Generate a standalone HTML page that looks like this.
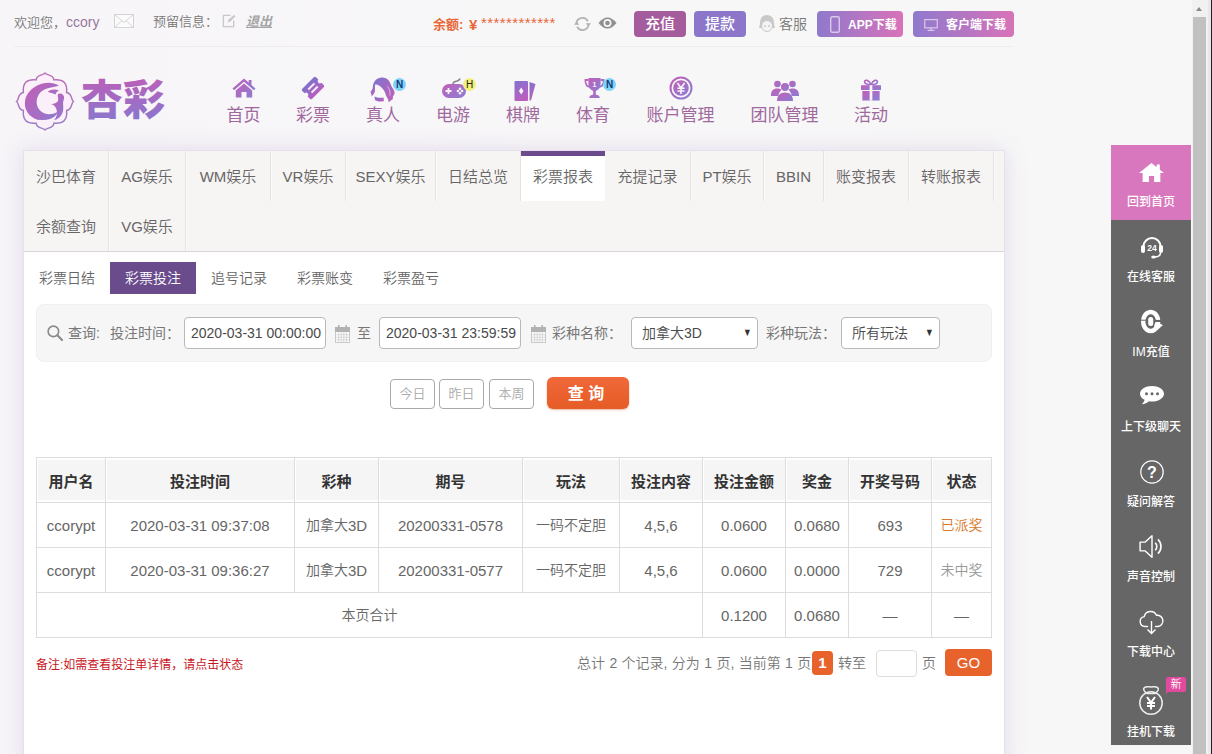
<!DOCTYPE html>
<html lang="zh-CN">
<head>
<meta charset="utf-8">
<title>杏彩 - 彩票投注</title>
<style>
*{box-sizing:border-box;margin:0;padding:0}
html,body{width:1212px;height:754px;overflow:hidden}
body{position:relative;font-family:"Liberation Sans","Noto Sans CJK SC",sans-serif;font-size:14px;color:#666;background:#f8f7f8;font-weight:350}
.abs{position:absolute}
#bg{position:absolute;left:0;top:0;width:1192px;height:754px;background:
 linear-gradient(90deg,#f7f5f8 0,#f8f7f8 600px,#f7f7f7 1100px)}
/* scrollbar */
#sb{position:absolute;left:1192px;top:0;width:20px;height:754px;background:#f1f1f1}
#sb .thumb{position:absolute;left:1px;top:17px;width:13px;height:737px;background:#c1c1c1}
#sb .edge{position:absolute;left:16px;top:0;width:3px;height:754px;background:#e6e6ec}
#sb .line{position:absolute;left:19px;top:0;width:1px;height:754px;background:#222}
#sb .arr{position:absolute;left:4px;top:7px;width:0;height:0;border-left:3.500px solid transparent;border-right:3.500px solid transparent;border-bottom:4px solid #8a8a8a}
/* top bar */
#top{position:absolute;left:14px;top:0;width:1000px;height:47px;border-bottom:1px solid #eeecee}
#top span,#top a{position:absolute;white-space:nowrap;line-height:20px;top:12px;font-size:13px;color:#777}
.btn{font-weight:400;position:absolute;top:11px;height:26px;border-radius:4px;color:#fff;font-size:14px;line-height:26px;text-align:center;white-space:nowrap}
/* nav */
.nav{position:absolute;top:70px;height:60px;text-align:center;color:#a0699e;font-size:17px}
.nav b{position:absolute;left:0;right:0;top:35px;font-weight:normal;line-height:22px}
.nav svg{position:absolute;top:8px}
/* panel */
#panel{position:absolute;left:23px;top:150px;width:982px;height:620px;background:#fff;border:1px solid #e6e0ea;box-shadow:0 0 22px rgba(150,110,190,.2)}
#tabs{position:absolute;left:0;top:0;width:980px;height:101px;background:#f7f4f4;border-bottom:1px solid #d9d6d9}
.tab{position:absolute;height:50px;line-height:52px;font-size:15px;color:#666;text-align:center;border-right:1px solid #e6e2e4;white-space:nowrap;box-shadow:1px 0 0 #fbfafa}
.tab.on{box-shadow:none;background:#fff;border-top:5px solid #6a4b8c;line-height:42px;border-right:none}
.sub{position:absolute;top:111px;height:32px;width:86px;line-height:32px;text-align:center;font-size:14px;color:#666}
.sub.on{background:#6a4b8c;color:#fff}
#search{position:absolute;left:12px;top:153px;width:956px;height:58px;background:#f6f6f6;border-radius:8px;border:1px solid #f0f0f0}
#search span{position:absolute;top:18px;line-height:20px;font-size:14px;color:#777;font-weight:400;white-space:nowrap}
.inp{position:absolute;top:12px;height:32px;border:1px solid #b9b9b9;border-radius:4px;background:#fff;font-size:14px;color:#4a4a4a;line-height:30px;padding-left:6px;white-space:nowrap}
.qb{position:absolute;top:228px;height:30px;width:45px;border:1px solid #aaa;border-radius:4px;color:#aaa;font-size:13px;line-height:28px;text-align:center;background:#fff}
#go{position:absolute;left:523px;top:226px;width:82px;height:32px;border-radius:6px;background:linear-gradient(#f0683a,#e65c26);color:#fff;font-size:16px;font-weight:bold;line-height:34px;text-align:center;padding-right:4px;box-shadow:0 1px 2px rgba(200,80,30,.4)}
table{position:absolute;left:12px;top:306px;width:956px;border-collapse:collapse;table-layout:fixed}
td,th{border:1px solid #ddd;height:45px;text-align:center;font-size:15px;color:#666;font-weight:normal;white-space:nowrap;padding:0}
th{background:#f5f5f5;color:#333;font-weight:bold;font-size:15px;box-shadow:inset 0 2px 0 #fff,inset 0 -2px 0 #fff,inset 1px 0 0 #fff}
.c{font-size:14px;position:relative;top:-1px;font-weight:350}
.inp .arr{position:absolute;right:4px;top:-1px;font-style:normal;font-size:11px;color:#333;transform:scaleX(.8)}
/* side */
.side{position:absolute;left:1111px;width:80px;height:75px;background:#666;color:#fff;text-align:center;font-size:12px}
.side b{position:absolute;left:0;right:0;top:46px;line-height:18px;font-weight:500}
.side svg{position:absolute;left:26px;top:12px}
</style>
</head>
<body>
<div id="bg"></div>
<div id="sb"><div class="arr"></div><div class="thumb"></div><div class="edge"></div><div class="line"></div></div>

<div id="top">
 <span style="left:0">欢迎您，<i style="font-style:normal;color:#96789c;font-size:14px">ccory</i></span>
 <svg class="abs" style="left:100px;top:14px" width="20" height="14" preserveAspectRatio="none" viewBox="0 0 20 15"><rect x=".5" y=".5" width="19" height="14" fill="#fbfbfb" stroke="#d2d2d2"/><path d="M1 1l9 8 9-8M1 14l7-7M19 14l-7-7" fill="none" stroke="#d2d2d2"/></svg>
 <span style="left:139px">预留信息：</span>
 <svg class="abs" style="left:208px;top:14px" width="14" height="14" viewBox="0 0 15 15"><path d="M9 1.5H1.500V13.500H12.500V7" fill="none" stroke="#c8c8c8" stroke-width="1.400"/><path d="M6 9l1-3 6-5 1.500 1.500-5.500 5.500z" fill="#c8c8c8"/></svg>
 <a style="left:232px;font-style:italic;text-decoration:underline;color:#a5a5a5;font-weight:bold">退出</a>
 <span style="left:419px;top:15px;color:#e8673a;font-weight:bold;font-size:13px">余额:</span>
 <span style="left:455px;top:15px;color:#e8673a;font-size:15px;font-weight:bold">¥</span>
 <span style="left:467px;color:#e8673a;font-size:15px;letter-spacing:.4px;top:13px">************</span>
 <svg class="abs" style="left:560px;top:16px" width="17" height="16" viewBox="0 0 17 16"><path d="M2.500 8.500A6 6 0 0 1 13.900 5.400M14.500 7.500A6 6 0 0 1 3.100 10.600" fill="none" stroke="#b4b4b4" stroke-width="1.800"/><path d="M0 8.800h5.200l-2.600-3.500zM17 7.200h-5.200l2.600 3.500z" fill="#b4b4b4"/></svg>
 <svg class="abs" style="left:584px;top:16px" width="19" height="14" viewBox="0 0 19 14"><path d="M.5 7Q9.500-4 18.500 7Q9.500 18 .5 7z" fill="#8f8f8f"/><circle cx="9.500" cy="7" r="4" fill="#f8f7f8"/><circle cx="9.500" cy="7" r="2.300" fill="#8f8f8f"/></svg>
 <div class="btn" style="left:620px;width:52px;background:#a55c9d;font-size:15px;font-weight:500">充值</div>
 <div class="btn" style="left:680px;width:52px;background:#8b76c9;font-size:15px;font-weight:500">提款</div>
 <svg class="abs" style="left:745px;top:15px" width="16" height="19" viewBox="0 0 16 19"><path d="M8 0C3 0 1 4 1 8c0 2-1 4-1 5h16c0-1-1-3-1-5C15 4 13 0 8 0z" fill="#c9c9c9"/><circle cx="8" cy="11" r="5.500" fill="#f4f4f4" stroke="#c9c9c9"/><circle cx="6" cy="11" r=".8" fill="#aaa"/><circle cx="10" cy="11" r=".8" fill="#aaa"/></svg>
 <span style="left:765px;top:14px;color:#777;font-size:14px">客服</span>
 <div class="btn" style="left:803px;width:86px;background:linear-gradient(90deg,#8f79cd,#d873b8);font-size:12px;font-weight:bold;text-align:left;padding-left:31px;line-height:28px">APP下载</div>
 <svg class="abs" style="left:816px;top:16px" width="10" height="17" viewBox="0 0 10 17"><rect x=".7" y=".7" width="8.600" height="15.600" rx="1.500" fill="none" stroke="#d9c8ec" stroke-width="1.400"/></svg>
 <div class="btn" style="left:899px;width:101px;background:linear-gradient(90deg,#8f79cd,#d873b8);font-size:12px;font-weight:bold;text-align:left;padding-left:33px;line-height:28px">客户端下载</div>
 <svg class="abs" style="left:910px;top:19px" width="14" height="12" viewBox="0 0 16 14"><rect x=".7" y=".7" width="14.600" height="9.600" fill="none" stroke="#d9c8ec" stroke-width="1.400"/><path d="M8 10v3M4 13.300h8" stroke="#d9c8ec" stroke-width="1.400"/></svg>
</div>

<!-- LOGO -->
<svg class="abs" style="left:10px;top:66px" width="165" height="70" viewBox="0 0 165 70">
 <defs>
  <linearGradient id="lg" x1="0" y1="0" x2="0" y2="1"><stop offset="0" stop-color="#bb5fb8"/><stop offset="1" stop-color="#8779cf"/></linearGradient>
  <linearGradient id="lg2" x1="0" y1="0" x2="1" y2="1"><stop offset="0" stop-color="#c75cb4"/><stop offset="1" stop-color="#8a7dd2"/></linearGradient>
  <linearGradient id="lg3" x1="0" y1="0" x2="0" y2="1"><stop offset="0" stop-color="#b86cb4"/><stop offset="1" stop-color="#9a80c8"/></linearGradient>
 </defs>
 <path d="M25.7 12.5 C26.3 6.5 33.1 8.1 35.0 5.4 C36.9 8.1 43.7 6.5 44.3 12.5 Q59.0 11.0 57.5 25.7 C63.5 26.3 61.9 33.1 64.6 35.0 C61.9 36.9 63.5 43.7 57.5 44.3 Q59.0 59.0 44.3 57.5 C43.7 63.5 36.9 61.9 35.0 64.6 C33.1 61.9 26.3 63.5 25.7 57.5 Q11.0 59.0 12.5 44.3 C6.5 43.7 8.1 36.9 5.4 35.0 C8.1 33.1 6.5 26.3 12.5 25.7 Q11.0 11.0 25.7 12.5 z" fill="#fbf0f9" stroke="url(#lg3)" stroke-width="1.500" transform="translate(35 35.500) scale(.96) translate(-35 -35)"/>
 <g transform="translate(34.500 35.500) scale(.93) translate(-36.500 -35.500)">
 <path d="M52 18.500C40 11 22 18 16.500 31 12 45 22 56 36 55.500c8-.5 13-4 15.500-9.500-6 4.500-15 4.500-20-1-5.500-6-4-16 2-20.500 5.500-4 12.500-4.500 18.500-6z" fill="url(#lg2)"/>
 <path d="M40 25c3-2.500 8-3 12-1.500-2 1.500-3.500 2.500-3.500 4.500-3-1.500-6-2-8.500-3z" fill="url(#lg2)"/>
 <path d="M51 27.500c3-1.500 6 0 6.500 3 .5 2.500-1 4-1 6.500 0 4 1 8-1.500 12.500-2 3.500-5 5.500-8 6 3-3.500 3.500-7 2.500-11-.8-3.500-3-5.500-6-6 3.500-1 6-1 7.500-3.500 1-2-1-5.500 0-7.500z" fill="url(#lg2)"/>
 <path d="M22 50c4 1 7 .5 9-1 2 2 5 2.500 8 1.500-3 3.500-6 4.500-10 4.500-3-.5-5.500-2.500-7-5z" fill="url(#lg2)"/>
 </g>
 <text x="71" y="49" font-family="'Liberation Sans','Noto Sans CJK SC',sans-serif" font-weight="900" font-size="42" fill="url(#lg)" textLength="84" lengthAdjust="spacingAndGlyphs">杏彩</text>
</svg>
<!-- /LOGO --><!-- NAV -->
<svg width="0" height="0" style="position:absolute"><defs><linearGradient id="ig" x1="0" y1="0" x2="1" y2="1"><stop offset="0" stop-color="#c25fb7"/><stop offset="1" stop-color="#8b7ed4"/></linearGradient><linearGradient id="ig3" x1="0" y1="0" x2="1" y2="1"><stop offset="0" stop-color="#7d74cf"/><stop offset="1" stop-color="#c45fb8"/></linearGradient><linearGradient id="ig4" x1="0" y1="0" x2="0.300" y2="1"><stop offset="0" stop-color="#8272cf"/><stop offset="1" stop-color="#bb5fbf"/></linearGradient><linearGradient id="ig2" x1="0" y1="0" x2="0" y2="1"><stop offset="0" stop-color="#7f72cc"/><stop offset="1" stop-color="#b85fc0"/></linearGradient></defs></svg>
<div class="nav" style="left:208.5px;width:70px"><svg style="left:23px;top:8px" width="24" height="20" viewBox="0 0 24 20"><path d="M12 0.500L0.500 10.500l1.600 1.700L12 3.800l9.900 8.400 1.600-1.700-4-3.500V2h-2.800v2.600z" fill="url(#ig)"/><path d="M12 5.500L3.800 12.500V19.500h5.700v-5.500h5v5.500h5.700V12.500z" fill="url(#ig)"/></svg><b>首页</b></div>
<div class="nav" style="left:278px;width:70px"><svg style="left:22px;top:6px" width="26" height="24" viewBox="0 0 24 22"><g transform="rotate(-45 12 11)"><path d="M4.500 4.500h15a1.500 1.500 0 0 1 1.500 1.500v3a2 2 0 0 0 0 4v3a1.500 1.500 0 0 1-1.500 1.500h-15a1.500 1.500 0 0 1-1.500-1.500v-3a2 2 0 0 0 0-4v-3a1.500 1.500 0 0 1 1.500-1.500z" fill="url(#ig2)"/><rect x="8" y="8" width="8" height="1.800" fill="#fbeefa"/><rect x="8" y="12.200" width="8" height="1.800" fill="#fbeefa"/></g></svg><b>彩票</b></div>
<div class="nav" style="left:348px;width:70px"><svg style="left:22px;top:7px" width="26" height="26" viewBox="0 0 26 26"><path d="M3 12C2 6 6 .5 12 .5c6 0 8 4.500 9 7.500 1 3 3 4 3.500 7 .5 3-2.500 4-1.500 7-2 1-4 3-4.500 3.500.5-3.500-2.500-5.500-3-8.500C15 14 13 12 11 10 9 8 6 7 5 8c-1 1-1 3-2 4z" fill="url(#ig3)"/><path d="M5 8C2 10 3 13 .5 14.500 1 17 2 18 1.500 19.500 3.500 17.500 5.500 15 5 12z" fill="url(#ig3)"/><path d="M4.500 19.500c2.500 1.500 6.500 1.500 9 1l.5 3.500c-4 1-7 .5-9-1z" fill="url(#ig3)"/><path d="M12.500 13c1.500 2 1.500 4.500.5 6.500M17.500 9.500c2 2.500 3 6 2.500 9" fill="none" stroke="#f8f6f8" stroke-width=".8" opacity=".7"/></svg><i style="position:absolute;left:45px;top:8px;width:13px;height:13px;border-radius:7px;background:#7fd4f4;color:#123a80;font:bold 10px/13px 'Liberation Sans',sans-serif;text-align:center">N</i><b>真人</b></div>
<div class="nav" style="left:418px;width:70px"><svg style="left:23px;top:7px" width="26" height="22" viewBox="0 0 26 22"><path d="M12 7.500C12 4.500 14 4.500 15.500 4.200s3-.7 3.500-2.700" fill="none" stroke="#8a8590" stroke-width="1.600"/><rect x="1" y="7" width="24" height="14" rx="7" fill="url(#ig)"/><path d="M7.500 11v6M4.500 14h6" stroke="#f8f6f8" stroke-width="1.800"/><circle cx="17" cy="14" r="1.300" fill="#f8f6f8"/><circle cx="21" cy="14" r="1.300" fill="#f8f6f8"/><circle cx="19" cy="11.700" r="1.300" fill="#f8f6f8"/><circle cx="19" cy="16.300" r="1.300" fill="#f8f6f8"/></svg><i style="position:absolute;left:45px;top:8px;width:13px;height:13px;border-radius:7px;background:#f3f07c;color:#222;font:normal 10px/13px 'Liberation Sans',sans-serif;text-align:center">H</i><b>电游</b></div>
<div class="nav" style="left:488px;width:70px"><svg style="left:25px;top:9.5px" width="24" height="22" viewBox="0 0 24 22"><path d="M16.500 2l6 2-4.500 16.500h-1.500z" fill="url(#ig4)"/><rect x="1.500" y="1" width="13.500" height="20" rx="1" fill="url(#ig4)"/><path d="M8.200 7.500l2.300 3.500-2.300 3.500-2.300-3.500z" fill="#fdf4fc"/></svg><b>棋牌</b></div>
<div class="nav" style="left:558px;width:70px"><svg style="left:26px;top:7px" width="21" height="22" viewBox="0 0 24 22" preserveAspectRatio="none"><path d="M5 1h14v6a7 7 0 0 1-14 0z" fill="url(#ig)"/><path d="M5 3H1.500c0 4 1.500 6.500 5 7M19 3h3.500c0 4-1.500 6.500-5 7" fill="none" stroke="url(#ig)" stroke-width="1.800"/><rect x="10.500" y="13" width="3" height="5" fill="url(#ig)"/><path d="M6 21c0-2 2-3.500 6-3.500s6 1.500 6 3.500z" fill="url(#ig)"/><text x="12" y="10.500" font-size="8" font-weight="bold" text-anchor="middle" fill="#f8f6f8" font-family="Liberation Sans,sans-serif">1</text></svg><i style="position:absolute;left:45px;top:8px;width:13px;height:13px;border-radius:7px;background:#7fd4f4;color:#123a80;font:bold 10px/13px 'Liberation Sans',sans-serif;text-align:center">N</i><b>体育</b></div>
<div class="nav" style="left:628.5px;width:104px"><svg style="left:40px;top:6px" width="24" height="24" viewBox="0 0 24 24"><circle cx="12" cy="12" r="10.500" fill="none" stroke="url(#ig)" stroke-width="2"/><circle cx="12" cy="12" r="7.800" fill="url(#ig)"/><path d="M8.500 7l3.500 5 3.500-5M12 12v6M8.500 12.300h7M8.500 15h7" fill="none" stroke="#f8f6f8" stroke-width="1.600"/></svg><b>账户管理</b></div>
<div class="nav" style="left:732.5px;width:104px"><svg style="left:38px;top:9px" width="28" height="22" viewBox="0 0 28 22"><circle cx="6.500" cy="5" r="3.300" fill="url(#ig)"/><circle cx="21.500" cy="5" r="3.300" fill="url(#ig)"/><path d="M0 16c0-4 2-6.500 6.500-6.500 2 0 3 .5 4 1.500-2 1.500-3 3.500-3 6H0zM28 16c0-4-2-6.500-6.500-6.500-2 0-3 .5-4 1.500 2 1.500 3 3.500 3 6H28z" fill="url(#ig)"/><circle cx="14" cy="8" r="4" fill="url(#ig)"/><path d="M6 22c0-5.500 3-8.500 8-8.500s8 3 8 8.500z" fill="url(#ig)"/></svg><b>团队管理</b></div>
<div class="nav" style="left:836px;width:70px"><svg style="left:25px;top:8.5px" width="20" height="22" viewBox="0 0 22 23" preserveAspectRatio="none"><path d="M11 6C9 1 4 0 4 3s4 3 7 3c3 0 7 0 7-3s-5-2-7 3z" fill="none" stroke="url(#ig)" stroke-width="1.800"/><rect x="0" y="6.500" width="22" height="5" fill="url(#ig)"/><rect x="1.500" y="12.500" width="19" height="10" fill="url(#ig)"/><rect x="9.500" y="6.500" width="3" height="16" fill="#f8f6f8"/></svg><b>活动</b></div>
<!-- /NAV -->

<div id="panel">
<div id="tabs">
<div class="tab" style="left:0px;top:0;width:85px">沙巴体育</div>
<div class="tab" style="left:85px;top:0;width:77px">AG娱乐</div>
<div class="tab" style="left:162px;top:0;width:85px">WM娱乐</div>
<div class="tab" style="left:247px;top:0;width:75px">VR娱乐</div>
<div class="tab" style="left:322px;top:0;width:90px">SEXY娱乐</div>
<div class="tab" style="left:412px;top:0;width:85px">日结总览</div>
<div class="tab on" style="left:497px;top:0;width:84px">彩票报表</div>
<div class="tab" style="left:581px;top:0;width:86px">充提记录</div>
<div class="tab" style="left:667px;top:0;width:73px">PT娱乐</div>
<div class="tab" style="left:740px;top:0;width:60px">BBIN</div>
<div class="tab" style="left:800px;top:0;width:85px">账变报表</div>
<div class="tab" style="left:885px;top:0;width:85px">转账报表</div>
<div class="tab" style="left:0;top:50px;width:85px">余额查询</div>
<div class="tab" style="left:85px;top:50px;width:77px">VG娱乐</div>
</div>
<div class="sub" style="left:0px">彩票日结</div>
<div class="sub on" style="left:86px">彩票投注</div>
<div class="sub" style="left:172px">追号记录</div>
<div class="sub" style="left:258px">彩票账变</div>
<div class="sub" style="left:344px">彩票盈亏</div>
<div id="search">
<svg class="abs" style="left:10px;top:20px" width="16" height="16" viewBox="0 0 17 17"><circle cx="6.800" cy="6.800" r="5.600" fill="none" stroke="#8a8a8a" stroke-width="1.700"/><path d="M11 11l5 5" stroke="#8a8a8a" stroke-width="2.200" stroke-linecap="round"/></svg>
<span style="left:31px">查询:</span>
<span style="left:73px">投注时间：</span>
<div class="inp" style="left:147px;width:142px">2020-03-31 00:00:00</div>
<svg class="abs" style="left:298px;top:20px" width="15" height="18" viewBox="0 0 15 18"><rect x=".5" y="2.500" width="14" height="15" fill="#fff" stroke="#c9c9c9"/><rect x="0" y="2" width="15" height="5" fill="#b2b2b2"/><path d="M1 9.700h13M1 12.300h13M1 14.900h13M3.600 7v10M6.200 7v10M8.800 7v10M11.400 7v10" stroke="#d4d4d4" stroke-width=".9"/><rect x="3" y="0" width="1.600" height="4" fill="#b2b2b2"/><rect x="10.400" y="0" width="1.600" height="4" fill="#b2b2b2"/></svg>
<span style="left:320px">至</span>
<div class="inp" style="left:342px;width:142px">2020-03-31 23:59:59</div>
<svg class="abs" style="left:494px;top:20px" width="15" height="18" viewBox="0 0 15 18"><rect x=".5" y="2.500" width="14" height="15" fill="#fff" stroke="#c9c9c9"/><rect x="0" y="2" width="15" height="5" fill="#b2b2b2"/><path d="M1 9.700h13M1 12.300h13M1 14.900h13M3.600 7v10M6.200 7v10M8.800 7v10M11.400 7v10" stroke="#d4d4d4" stroke-width=".9"/><rect x="3" y="0" width="1.600" height="4" fill="#b2b2b2"/><rect x="10.400" y="0" width="1.600" height="4" fill="#b2b2b2"/></svg>
<span style="left:515px">彩种名称：</span>
<div class="inp" style="left:594px;width:127px;padding-left:10px">加拿大3D<i class="arr">▼</i></div>
<span style="left:729px">彩种玩法：</span>
<div class="inp" style="left:804px;width:99px;padding-left:10px">所有玩法<i class="arr">▼</i></div>
</div>
<div class="qb" style="left:366px">今日</div>
<div class="qb" style="left:415px">昨日</div>
<div class="qb" style="left:465px">本周</div>
<div id="go">查 询</div>
<table><colgroup><col style="width:69px"><col style="width:189px"><col style="width:84px"><col style="width:144px"><col style="width:97px"><col style="width:83px"><col style="width:83px"><col style="width:63px"><col style="width:83px"><col style="width:60px"></colgroup>
<tr><th>用户名</th><th>投注时间</th><th>彩种</th><th>期号</th><th>玩法</th><th>投注内容</th><th>投注金额</th><th>奖金</th><th>开奖号码</th><th>状态</th></tr>
<tr><td>ccorypt</td><td>2020-03-31 09:37:08</td><td><span class="c">加拿大</span>3D</td><td>20200331-0578</td><td><span class="c">一码不定胆</span></td><td>4,5,6</td><td>0.0600</td><td>0.0680</td><td>693</td><td><span class="c" style="color:#d9782d">已派奖</span></td></tr>
<tr><td>ccorypt</td><td>2020-03-31 09:36:27</td><td><span class="c">加拿大</span>3D</td><td>20200331-0577</td><td><span class="c">一码不定胆</span></td><td>4,5,6</td><td>0.0600</td><td>0.0000</td><td>729</td><td><span class="c" style="color:#999">未中奖</span></td></tr>
<tr><td colspan="6"><span class="c">本页合计</span></td><td>0.1200</td><td>0.0680</td><td>—</td><td>—</td></tr>
</table>
<div class="abs" style="left:12px;top:505px;font-size:12px;line-height:18px;color:#c8161d;white-space:nowrap;font-weight:400">备注:如需查看投注单详情，请点击状态</div>
<div class="abs" id="pg" style="left:553px;top:502px;word-spacing:.5px;font-size:14px;line-height:20px;color:#777;white-space:nowrap">总计 2 个记录, 分为 1 页, 当前第 1 页</div>
<div class="abs" style="left:788px;top:500px;width:21px;height:24px;border-radius:4px;background:#e8622c;color:#fff;font-weight:bold;font-size:15px;line-height:24px;text-align:center">1</div>
<div class="abs" style="left:814px;top:502px;font-size:14px;line-height:20px;color:#777">转至</div>
<div class="abs" style="left:852px;top:499px;width:41px;height:27px;border:1px solid #ddd;border-radius:4px;background:#fff"></div>
<div class="abs" style="left:898px;top:502px;font-size:14px;line-height:20px;color:#777">页</div>
<div class="abs" style="left:921px;top:498px;width:47px;height:27px;border-radius:4px;background:#e8622c;color:#fff;font-size:15px;line-height:27px;text-align:center">GO</div>
</div>
<!-- /PANEL -->
<!-- SIDE -->
<div class="side" style="top:145px;background:#d977be"><svg style="left:28px;top:18px" width="25" height="19" viewBox="0 0 24 19" preserveAspectRatio="none"><path d="M12 0L0 10h3.500v9h6v-6h5v6h6v-9H24L20 6.700V1.500h-3v2.700z" fill="#fff"/></svg><b style="top:48px">回到首页</b></div>
<div class="side" style="top:220px;background:#666"><svg style="left:28.5px;top:16px" width="24" height="24" viewBox="0 0 24 24"><path d="M3.500 13V10.500a8.500 8.500 0 0 1 17 0V13" fill="none" stroke="#fff" stroke-width="2"/><rect x="1" y="9" width="4" height="8" rx="2" fill="#fff"/><rect x="19" y="9" width="4" height="8" rx="2" fill="#fff"/><path d="M20.500 16.500c0 3-2.500 4.500-6 4.500" fill="none" stroke="#fff" stroke-width="1.500"/><ellipse cx="13.500" cy="21" rx="2.300" ry="1.600" fill="#fff"/><text x="12" y="14.500" font-size="8.500" font-weight="bold" text-anchor="middle" fill="#fff" font-family="Liberation Sans,sans-serif">24</text></svg><b style="top:48px">在线客服</b></div>
<div class="side" style="top:295px;background:#666"><svg style="left:28.5px;top:14px" width="24" height="25" viewBox="0 0 24 25"><path fill-rule="evenodd" d="M10.700 0.700a9.700 11.800 0 1 0 0.010 0zM10.700 5.300a5.300 7.200 0 1 1 -0.010 0z" fill="#fff"/><path d="M14 10.900h10v2.100H14z" fill="#666"/><path d="M15.500 13L23 16 17.500 21 14 17z" fill="#fff"/><rect x="8.200" y="8" width="5" height="9" rx="2.500" fill="#fff"/><rect x="0" y="10.700" width="5.800" height="1" fill="#666"/></svg><b style="top:48px">IM充值</b></div>
<div class="side" style="top:370px;background:#666"><svg style="left:28.5px;top:16px" width="24" height="19" viewBox="0 0 24 19"><path d="M12 0C5.400 0 0 3.400 0 7.700c0 2.500 1.800 4.700 4.600 6.100-.3 1.600-1.300 3.200-2.800 4.400 3-.2 5.400-1.300 7-3 1 .2 2.100.3 3.200.3 6.600 0 12-3.500 12-7.800S18.600 0 12 0z" fill="#fff"/><circle cx="6.500" cy="7.700" r="1.500" fill="#666"/><circle cx="12" cy="7.700" r="1.500" fill="#666"/><circle cx="17.500" cy="7.700" r="1.500" fill="#666"/></svg><b style="top:48px">上下级聊天</b></div>
<div class="side" style="top:445px;background:#666"><svg style="left:28.5px;top:15px" width="24" height="24" viewBox="0 0 24 24"><circle cx="12" cy="12" r="11.200" fill="none" stroke="#fff" stroke-width="1.200"/><text x="12" y="17.500" font-size="16" font-weight="bold" text-anchor="middle" fill="#fff" font-family="Liberation Sans,sans-serif">?</text></svg><b style="top:48px">疑问解答</b></div>
<div class="side" style="top:520px;background:#666"><svg style="left:27.5px;top:14px" width="26" height="25" viewBox="0 0 24 23"><path d="M1 7.500h4.500L12 1.500v20L5.500 15.500H1z" fill="none" stroke="#fff" stroke-width="1.300" stroke-linejoin="round"/><path d="M15 8a5 5 0 0 1 0 7M17.500 5a9 9 0 0 1 0 13" fill="none" stroke="#fff" stroke-width="1.500"/></svg><b style="top:48px">声音控制</b></div>
<div class="side" style="top:595px;background:#666"><svg style="left:28px;top:15px" width="25" height="25" viewBox="0 0 25 25"><path d="M8.500 16.500H6a5 5 0 0 1-.8-9.900 6.500 6.500 0 0 1 12.300-1.300A5.500 5.500 0 0 1 19 16.500H16.500" fill="none" stroke="#fff" stroke-width="1.400" stroke-linecap="round"/><path d="M12.500 11v12M8.500 19.500l4 4 4-4" fill="none" stroke="#fff" stroke-width="1.400"/></svg><b style="top:48px">下载中心</b></div>
<div class="side" style="top:670px;background:#666"><svg style="left:26.5px;top:15px" width="26" height="30" viewBox="0 0 26 30"><circle cx="13" cy="18" r="11.200" fill="none" stroke="#eee" stroke-width="1.500"/><path d="M6 3c2-2 4-1 7-1s5-1 7 1c1 1.500-1 4-3 5.500H9C7 7 5 4.500 6 3z" fill="none" stroke="#eee" stroke-width="1.500"/><path d="M9 12l4 5.500 4-5.500M13 17.500v7M9 18h8M9 21h8" fill="none" stroke="#fff" stroke-width="2"/></svg><i style="position:absolute;left:55px;top:7px;width:20px;height:15px;background:#e14a9d;border-radius:2px;font-style:normal;font-size:11px;line-height:15px;color:#fff">新</i><i style="position:absolute;left:55px;top:19px;width:0;height:0;border-top:5px solid #e14a9d;border-right:5px solid transparent"></i><b style="top:53px">挂机下载</b></div>
<!-- /SIDE -->
</body>
</html>
